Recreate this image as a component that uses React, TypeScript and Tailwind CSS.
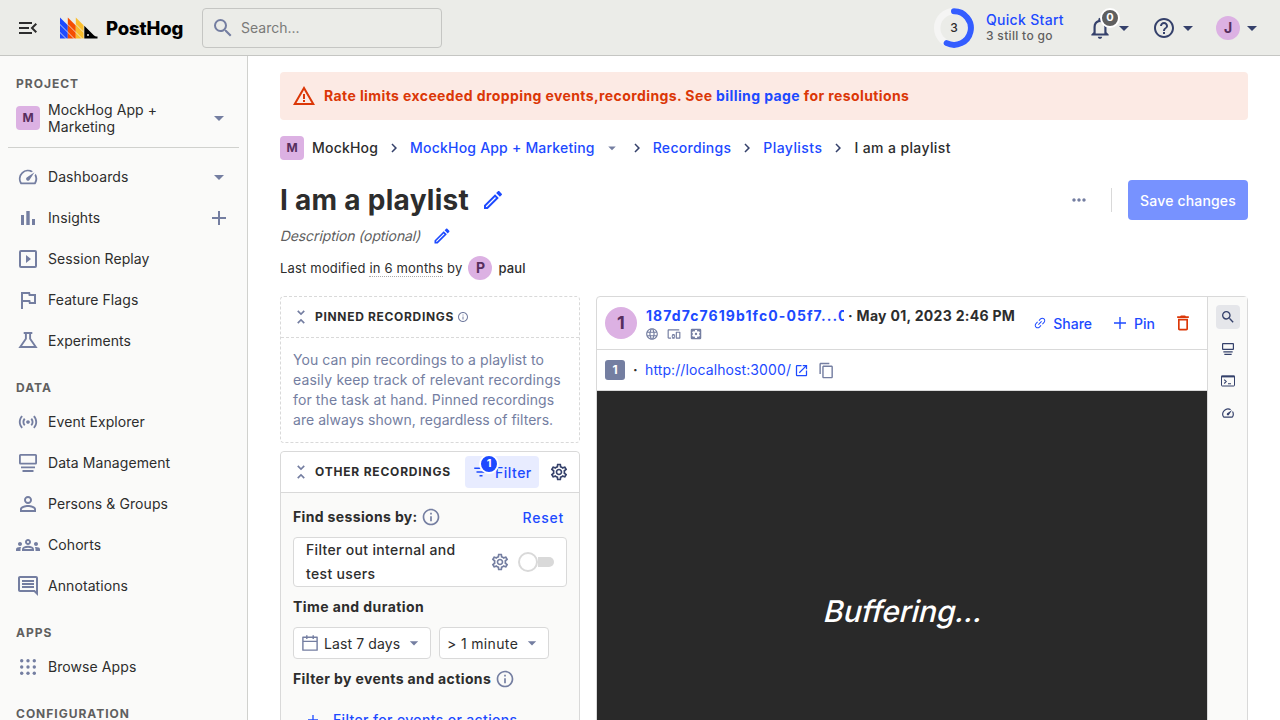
import type { ReactNode } from 'react'
import {
  MdMenuOpen, MdSearch, MdArrowDropDown, MdNotificationsNone, MdHelpOutline, MdSpeed,
  MdOutlineFlag, MdSensors, MdPersonOutline, MdOutlineGroups, MdOutlineComment, MdOutlineSettings,
  MdOutlineEdit, MdWarningAmber, MdDeleteOutline, MdOpenInNew, MdContentCopy, MdInfoOutline,
  MdUnfoldLess, MdChevronRight, MdLanguage, MdOutlineDevicesOther, MdSettingsApplications,
  MdMoreHoriz, MdFilterList,
} from 'react-icons/md'
import { AiOutlineCalendar, AiOutlineLink } from 'react-icons/ai'

function Logo() {
  return (
    <svg width="38" height="22" viewBox="0 0 38 22" className="shrink-0">
      <path d="M0 .4 7.8 8.2V21.4H0z" fill="#1d4aff" />
      <path d="M7.8.4 15.8 8.4V21.4H7.8z" fill="#f54e00" />
      <path d="M15.8.4 23.6 8.2V21.4H15.8z" fill="#f9bd2b" />
      <path d="M-1 6.5 7.800 15.300M-1 14.5 8 23.5M7.8 7.4 15.800 15.400M7.8 15.3 16 23.5M15.8 7.4 24 15.6M15.8 15.3 24 23.5" stroke="#ebece8" strokeWidth=".8" />
      <path d="M24.3 8.7 33.8 18.2c.8.8 2 1.3 3.7 1.3v1.9H24.3z" fill="#000" />
      <circle cx="28" cy="17.9" r="1" fill="#ebece8" />
    </svg>
  )
}

function BarsIcon() {
  return (
    <svg width="24" height="24" viewBox="0 0 24 24" fill="currentColor">
      <path d="M5 9h3v10H5zM10.3 5h3.4v14h-3.4zM16 13h3v6h-3z" />
    </svg>
  )
}

function ReplayIcon() {
  return (
    <svg width="24" height="24" viewBox="0 0 24 24" fill="none">
      <rect x="4" y="4" width="16" height="16" rx="1" stroke="currentColor" strokeWidth="2" />
      <path d="M10 8v8l5-4z" fill="currentColor" />
    </svg>
  )
}

function FlaskIcon() {
  return (
    <svg width="24" height="24" viewBox="0 0 24 24" fill="none" stroke="currentColor" strokeWidth="1.9">
      <path d="M7.7 4h8.6M9.9 4v5.8L4.200 18h15.600L14.100 9.800V4" />
    </svg>
  )
}

function DotsGridIcon() {
  return (
    <svg width="24" height="24" viewBox="0 0 24 24" fill="currentColor">
      {[5.7, 12, 18.3].flatMap((y) => [5.7, 12, 18.3].map((x) => <circle key={`${x}-${y}`} cx={x} cy={y} r="1.7" />))}
    </svg>
  )
}

function StackIcon({ size = 24 }: { size?: number }) {
  return (
    <svg width={size} height={size} viewBox="0 0 24 24" fill="currentColor">
      <path d="M4.500 3h15A1.500 1.500 0 0 1 21 4.500v7.500a1.500 1.500 0 0 1-1.500 1.500h-15A1.500 1.500 0 0 1 3 12V4.500A1.500 1.500 0 0 1 4.500 3zm.3 1.700v7.100h14.400V4.700zM5 15.400h14v1.900H5zM6.500 19h11v1.900h-11z" />
    </svg>
  )
}

function TerminalIcon() {
  return (
    <svg width="16" height="16" viewBox="0 0 16 16" fill="none" stroke="currentColor">
      <rect x="1.5" y="3" width="13" height="10" rx=".6" />
      <path d="M1.200 3.500h13.600" strokeWidth="1.800" />
      <path d="m4.200 6.700 2 1.900-2 1.900M8 10.700h3" strokeWidth="1.100" />
    </svg>
  )
}

function PlusIcon({ size, w }: { size: number; w: number }) {
  return (
    <svg width={size} height={size} viewBox="0 0 14 14" stroke="currentColor" strokeWidth={w}>
      <path d="M7 0v14M0 7h14" />
    </svg>
  )
}

function NavItem({ icon, label, end }: { icon: ReactNode; label: string; end?: ReactNode }) {
  return (
    <li className="mb-px flex h-10 items-center px-2">
      <span className="flex w-6 shrink-0 items-center justify-center text-[#747ea1]">{icon}</span>
      <span className="ml-2 flex-1 tracking-[0.08px]">{label}</span>
      {end && <span className="flex w-6 justify-center text-[#747ea1]">{end}</span>}
    </li>
  )
}

function NavHeading({ children }: { children: ReactNode }) {
  return (
    <li className="flex h-10 items-end px-2 pb-1 text-xs leading-5 font-bold tracking-[1px] text-[#5f5f5f]">
      {children}
    </li>
  )
}

function Crumb() {
  return <MdChevronRight size={18} className="mx-[7px] text-[#35416b]" />
}

function Header() {
  return (
    <header className="flex h-14 shrink-0 items-center border-b border-[#c5c6c3] bg-[#ebece8] px-4">
      <MdMenuOpen size={24} className="text-[#2d2d2d]" />
      <div className="ml-5 flex w-[142px] items-center">
        <Logo />
        <span className="mt-px ml-2 text-[18.5px] leading-6 font-extrabold tracking-[-0.15px] text-black">PostHog</span>
      </div>
      <div className="flex h-10 w-60 items-center rounded border border-[#c5c6c3] px-2">
        <MdSearch size={24} className="text-[#747ea1]" />
        <span className="ml-1.5 text-[#7a7a78]">Search...</span>
      </div>
      <div className="ml-auto flex items-center">
        <div className="relative flex size-10 items-center justify-center">
          <svg width="40" height="40" viewBox="0 0 40 40" fill="none" className="absolute inset-0">
            <circle cx="20" cy="20" r="16.800" stroke="#f5f5f4" strokeWidth="6.400" />
            <path d="M20 3.200A16.800 16.800 0 1 1 12.700 35.100" stroke="#345dff" strokeWidth="6" strokeLinecap="round" />
          </svg>
          <span className="relative text-xs font-medium">3</span>
        </div>
        <div className="ml-3 w-[102px]">
          <div className="leading-4 font-medium tracking-[0.3px] text-[#1d4aff]">Quick Start</div>
          <div className="text-xs leading-4 font-medium tracking-[0.32px] text-[#5f5f5f]">3 still to go</div>
        </div>
        <div className="relative flex items-center text-[#35416b]">
          <MdNotificationsNone size={26} className="-mx-px" />
          <MdArrowDropDown size={24} />
          <span className="absolute -top-[7px] left-[12px] flex size-5 items-center justify-center rounded-full border-2 border-white bg-[#5f5f5f] text-[11px] font-bold text-white">
            0
          </span>
        </div>
        <div className="ml-4 flex items-center text-[#35416b]">
          <MdHelpOutline size={24} />
          <MdArrowDropDown size={24} />
        </div>
        <div className="ml-4 flex items-center text-[#35416b]">
          <span className="flex size-6 items-center justify-center rounded-full bg-[#dcb1e3] font-bold text-[#572e5e]">J</span>
          <MdArrowDropDown size={24} />
        </div>
      </div>
    </header>
  )
}

function Sidebar() {
  return (
    <nav className="w-[248px] shrink-0 overflow-hidden border-r border-[#d0d1ce] bg-[#fafaf9] px-2 pt-0.5">
      <ul>
        <NavHeading>PROJECT</NavHeading>
        <li className="flex h-10 items-center px-2">
          <span className="flex size-6 items-center justify-center rounded bg-[#dcb1e3] text-xs font-bold text-[#572e5e]">M</span>
          <span className="ml-2 flex-1 leading-[17px] tracking-[0.08px]">
            MockHog App +<br />Marketing
          </span>
          <MdArrowDropDown size={24} className="text-[#747ea1]" />
        </li>
        <li className="my-[9px] h-px bg-[#d0d1ce]" />
        <NavItem icon={<MdSpeed size={22} />} label="Dashboards" end={<MdArrowDropDown size={24} />} />
        <NavItem icon={<BarsIcon />} label="Insights" end={<PlusIcon size={14} w={2} />} />
        <NavItem icon={<ReplayIcon />} label="Session Replay" />
        <NavItem icon={<MdOutlineFlag size={24} />} label="Feature Flags" />
        <NavItem icon={<FlaskIcon />} label="Experiments" />
        <NavHeading>DATA</NavHeading>
        <NavItem icon={<MdSensors size={22} />} label="Event Explorer" />
        <NavItem icon={<StackIcon />} label="Data Management" />
        <NavItem icon={<MdPersonOutline size={24} />} label="Persons &amp; Groups" />
        <NavItem icon={<MdOutlineGroups size={24} />} label="Cohorts" />
        <NavItem icon={<MdOutlineComment size={24} />} label="Annotations" />
        <NavHeading>APPS</NavHeading>
        <NavItem icon={<DotsGridIcon />} label="Browse Apps" />
        <NavHeading>CONFIGURATION</NavHeading>
      </ul>
    </nav>
  )
}

function PlaylistColumn() {
  return (
    <div className="flex w-[300px] shrink-0 flex-col gap-2">
      <section className="rounded border border-dashed border-[#d9d9d9]">
        <div className="flex h-[41px] items-center border-b border-dashed border-[#d9d9d9] px-2.5">
          <MdUnfoldLess size={20} className="text-[#747ea1]" />
          <h4 className="ml-1 text-xs font-bold tracking-[0.68px]">PINNED RECORDINGS</h4>
          <MdInfoOutline size={12} className="ml-[3px] text-[#747ea1]" />
        </div>
        <p className="p-3 leading-5 whitespace-nowrap text-[#747ea1]">
          <span className="tracking-[0.08px]">You can pin recordings to a playlist to</span><br />
          <span className="tracking-[0.17px]">easily keep track of relevant recordings</span><br />
          <span className="tracking-[0.12px]">for the task at hand. Pinned recordings</span><br />
          <span className="tracking-[0.04px]">are always shown, regardless of filters.</span>
        </p>
      </section>
      <section className="flex-1 rounded border border-[#d9d9d9] bg-[#fafaf9]">
        <div className="flex h-[41px] items-center rounded-t border-b border-[#d9d9d9] bg-white px-2.5">
          <MdUnfoldLess size={20} className="text-[#747ea1]" />
          <h4 className="ml-1 text-xs font-bold tracking-[0.8px] whitespace-nowrap">OTHER RECORDINGS</h4>
          <div className="relative ml-auto flex h-8 w-[74px] items-center rounded bg-[#e8ecff] px-[7px] text-[#1d4aff]">
            <MdFilterList size={18} />
            <span className="ml-[5px] pt-px font-medium tracking-[0.5px]">Filter</span>
            <span className="absolute -top-[2px] left-[14px] flex size-5 items-center justify-center rounded-full border-2 border-white bg-[#1d4aff] text-[11px] font-bold text-white">
              1
            </span>
          </div>
          <MdOutlineSettings size={20} className="ml-2.5 text-[#35416b]" />
        </div>
        <div className="px-3">
          <div className="flex h-[44px] items-center pt-1">
            <span className="font-bold tracking-[0.35px]">Find sessions by:</span>
            <MdInfoOutline size={20} className="ml-[3px] text-[#747ea1]" />
            <span className="mr-[3px] ml-auto pt-0.5 font-medium tracking-[0.75px] text-[#1d4aff]">Reset</span>
          </div>
          <div className="flex h-[50px] items-center rounded border border-[#d9d9d9] bg-white px-3">
            <span className="flex-1 leading-6 font-medium tracking-[0.33px]">
              Filter out internal and<br />test users
            </span>
            <MdOutlineSettings size={20} className="text-[#747ea1]" />
            <span className="ml-2 flex w-9 items-center">
              <span className="size-5 shrink-0 rounded-full border-2 border-[#d9d9d9] bg-white" />
              <span className="h-2.5 flex-1 rounded-r-full bg-[#d9d9d9]" />
            </span>
          </div>
          <div className="flex h-10 items-center font-bold tracking-[0.42px]">Time and duration</div>
          <div className="flex gap-2">
            <div className="flex h-8 w-[138px] items-center rounded border border-[#d9d9d9] bg-white pr-1.5 pl-1.5">
              <AiOutlineCalendar size={20} className="text-[#747ea1]" />
              <span className="ml-1 pt-px tracking-[0.1px]">Last 7 days</span>
              <MdArrowDropDown size={20} className="ml-auto text-[#747ea1]" />
            </div>
            <div className="flex h-8 w-[110px] items-center rounded border border-[#d9d9d9] bg-white pr-1.5 pl-[7px]">
              <span className="pt-px tracking-[0.35px]">&gt; 1 minute</span>
              <MdArrowDropDown size={20} className="ml-auto text-[#747ea1]" />
            </div>
          </div>
          <div className="flex h-10 items-center">
            <span className="font-bold tracking-[0.38px]">Filter by events and actions</span>
            <MdInfoOutline size={20} className="ml-1 text-[#747ea1]" />
          </div>
          <div className="flex h-[42px] items-center pl-[15px] font-medium text-[#1d4aff]">
            <PlusIcon size={10} w={1.800} />
            <span className="ml-[15px] tracking-[0.35px]">Filter for events or actions</span>
          </div>
        </div>
      </section>
    </div>
  )
}

function Player() {
  return (
    <section className="flex min-w-0 flex-1 rounded border border-[#d9d9d9]">
      <div className="flex min-w-0 flex-1 flex-col">
        <div className="flex h-[53px] shrink-0 items-center border-b border-[#d9d9d9] px-2">
          <span className="flex size-8 shrink-0 items-center justify-center rounded-full bg-[#dcb1e3] text-lg font-bold text-[#572e5e]">1</span>
          <div className="ml-2 flex flex-col pt-0.5">
            <div className="flex leading-5 font-bold">
              <span className="w-[199px] overflow-hidden pl-px tracking-[1.08px] whitespace-nowrap text-[#1d4aff]">187d7c7619b1fc0-05f7...0</span>
              <span className="ml-[4px] tracking-[0.3px] whitespace-nowrap">· May 01, 2023 2:46 PM</span>
            </div>
            <div className="flex h-4 items-center gap-2 text-[#747ea1]">
              <MdLanguage size={14} />
              <MdOutlineDevicesOther size={14} />
              <MdSettingsApplications size={14} />
            </div>
          </div>
          <div className="ml-auto flex items-center pr-1.5 font-medium text-[#1d4aff]">
            <AiOutlineLink size={14} />
            <span className="ml-1.5 pt-0.5">Share</span>
            <span className="ml-[22px] flex"><PlusIcon size={12} w={1.600} /></span>
            <span className="ml-2 pt-0.5">Pin</span>
            <MdDeleteOutline size={20} className="ml-[18px] text-[#db3707]" />
          </div>
        </div>
        <div className="flex h-[41px] shrink-0 items-center border-b border-[#d9d9d9] px-2">
          <span className="flex size-5 items-center justify-center rounded-[3px] bg-[#747ea1] text-xs font-bold text-white">1</span>
          <span className="ml-2 w-3 font-bold">·</span>
          <span className="tracking-[0.1px] text-[#1d4aff]">http://localhost:3000/</span>
          <MdOpenInNew size={15} className="ml-[3px] text-[#1d4aff]" />
          <MdContentCopy size={17} className="ml-[9px] text-[#747ea1]" />
        </div>
        <div className="flex h-[441px] shrink-0 items-center justify-center bg-[#292929] pl-1 text-[30px] font-medium tracking-[-0.1px] text-white">
          <span className="-skew-x-[14deg]">Buffering...</span>
        </div>
      </div>
      <div className="flex w-10 shrink-0 flex-col items-center gap-2 border-l border-[#d9d9d9] bg-[#fafaf9] pt-2 text-[#35416b]">
        <span className="flex size-6 items-center justify-center rounded bg-[#e5e6ea]"><MdSearch size={16} /></span>
        <span className="flex size-6 items-center justify-center"><StackIcon size={16} /></span>
        <span className="flex size-6 items-center justify-center"><TerminalIcon /></span>
        <span className="flex size-6 items-center justify-center"><MdSpeed size={14} /></span>
      </div>
    </section>
  )
}

export default function App() {
  return (
    <div className="flex h-[720px] w-[1280px] flex-col overflow-hidden bg-white font-['Inter',sans-serif] text-sm text-[#2d2d2d]">
      <Header />
      <div className="flex min-h-0 flex-1">
        <Sidebar />
        <main className="flex min-w-0 flex-1 flex-col overflow-hidden px-8 pt-4">
          <div className="flex h-12 shrink-0 items-center rounded bg-[#fceae4] px-3 font-bold text-[#db3707]">
            <MdWarningAmber size={24} />
            <span className="ml-2 tracking-[0.4px]">
              Rate limits exceeded dropping events,recordings. See <span className="text-[#1d4aff]">billing page</span> for resolutions
            </span>
          </div>
          <div className="mt-4 flex h-6 shrink-0 items-center font-medium">
            <span className="flex size-6 items-center justify-center rounded bg-[#dcb1e3] text-xs font-bold text-[#572e5e]">M</span>
            <span className="ml-2 tracking-[0.2px]">MockHog</span>
            <Crumb />
            <span className="tracking-[0.2px] text-[#1d4aff]">MockHog App + Marketing</span>
            <MdArrowDropDown size={18} className="ml-2 text-[#747ea1]" />
            <Crumb />
            <span className="tracking-[0.3px] text-[#1d4aff]">Recordings</span>
            <Crumb />
            <span className="tracking-[0.44px] text-[#1d4aff]">Playlists</span>
            <Crumb />
            <span className="tracking-[0.38px]">I am a playlist</span>
          </div>
          <div className="mt-5 flex h-10 shrink-0 items-center">
            <h1 className="text-[28px] font-bold tracking-[0.28px]">I am a playlist</h1>
            <MdOutlineEdit size={24} className="ml-3 text-[#1d4aff]" />
            <MdMoreHoriz size={20} className="ml-auto text-[#747ea1]" />
            <span className="mr-4 ml-[22px] h-6 w-px bg-[#d9d9d9]" />
            <span className="flex h-10 w-[120px] items-center justify-center rounded bg-[#7792ff] pt-0.5 font-medium tracking-[0.17px] text-white">Save changes</span>
          </div>
          <div className="flex h-8 shrink-0 items-center">
            <span className="w-[140px] -skew-x-[14deg] pl-px tracking-[-0.1px] whitespace-nowrap text-[#5f5f5f]">Description (optional)</span>
            <MdOutlineEdit size={20} className="ml-3 text-[#1d4aff]" />
          </div>
          <div className="flex h-8 shrink-0 items-center text-[13px]">
            <span className="tracking-[0.18px]">Last modified <span className="border-b border-dotted border-[#aaa]">in 6 months</span> by</span>
            <span className="mx-1.5 flex size-6 items-center justify-center rounded-full bg-[#dcb1e3] text-sm font-bold text-[#572e5e]">P</span>
            <span className="font-medium tracking-[0.1px]">paul</span>
          </div>
          <div className="mt-3 flex h-[537px] shrink-0 gap-4">
            <PlaylistColumn />
            <Player />
          </div>
        </main>
      </div>
    </div>
  )
}
